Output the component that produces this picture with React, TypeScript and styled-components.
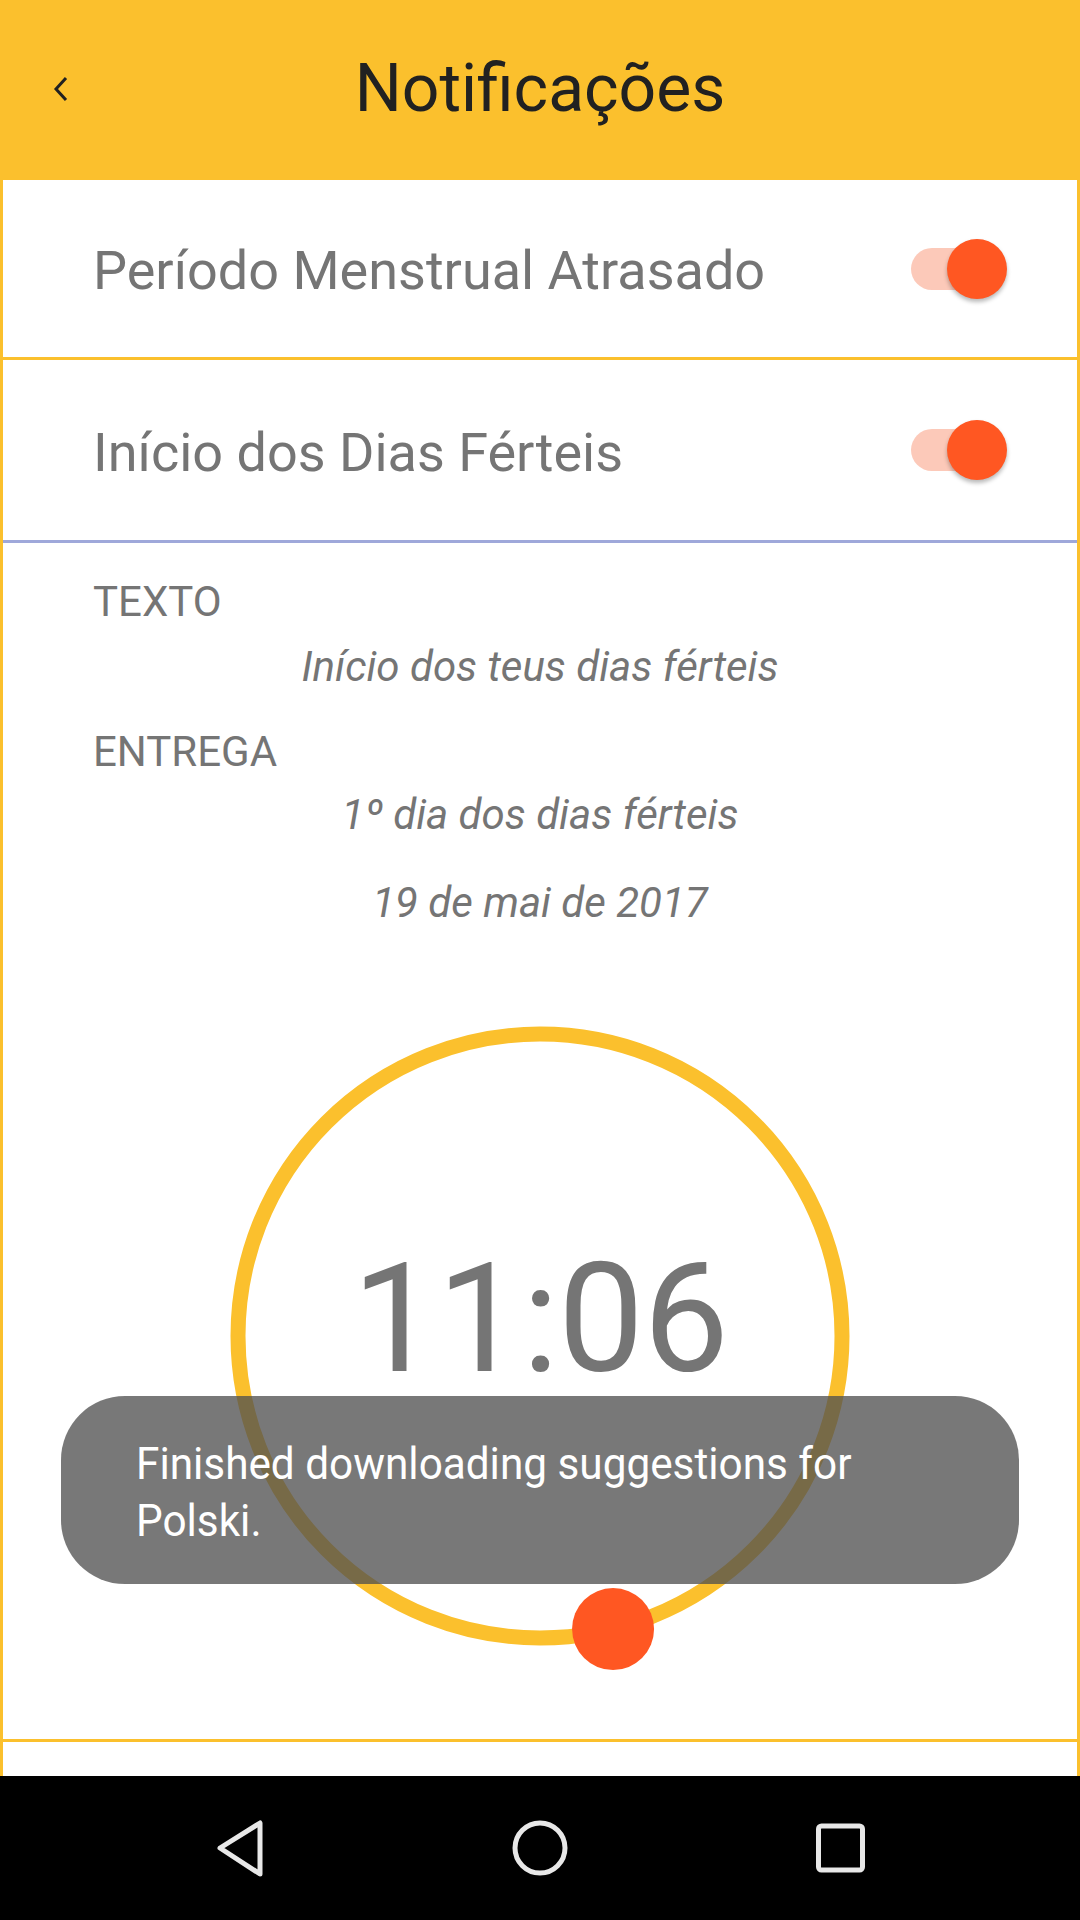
import React from 'react';
import styled, { createGlobalStyle } from 'styled-components';

const GlobalStyle = createGlobalStyle`
  html, body {
    margin: 0;
    padding: 0;
    background: #ffffff;
  }
  body {
    font-family: Roboto, 'Noto Sans', sans-serif;
  }
`;

const YELLOW = '#fbc02d';
const GREY_TEXT = '#757575';

const Screen = styled.div`
  position: relative;
  width: 1080px;
  height: 1920px;
  display: flex;
  flex-direction: column;
  overflow: hidden;
  background: #ffffff;
`;

const Header = styled.header`
  height: 180px;
  flex-shrink: 0;
  background: ${YELLOW};
  display: grid;
  grid-template-columns: 140px 1fr 140px;
  align-items: center;
`;

const BackButton = styled.button`
  justify-self: start;
  margin-left: 48px;
  margin-top: -2px;
  width: 26px;
  height: 30px;
  padding: 0;
  border: 0;
  background: transparent;
  display: flex;
  align-items: center;
  justify-content: center;
`;

const Title = styled.h1`
  margin: 0 0 4px;
  text-align: center;
  font-size: 66px;
  font-weight: 400;
  color: #212121;
`;

const Content = styled.main`
  flex: 1;
  display: flex;
  flex-direction: column;
  border-left: 3px solid ${YELLOW};
  border-right: 3px solid ${YELLOW};
  overflow: hidden;
`;

const SettingRow = styled.div<{ $height: number; $divider: string }>`
  height: ${({ $height }) => $height}px;
  flex-shrink: 0;
  display: flex;
  align-items: center;
  justify-content: space-between;
  padding: 0 82px 0 90px;
  border-bottom: 3px solid ${({ $divider }) => $divider};
`;

const RowLabel = styled.span`
  font-size: 54px;
  color: ${GREY_TEXT};
  margin-top: 4px;
`;

const SwitchTrack = styled.div`
  position: relative;
  width: 84px;
  height: 42px;
  border-radius: 21px;
  background: #fcc9b9;
`;

const SwitchThumb = styled.div`
  position: absolute;
  right: -12px;
  top: -9px;
  width: 60px;
  height: 60px;
  border-radius: 50%;
  background: #ff5722;
  box-shadow: 0 3px 4px rgba(0, 0, 0, 0.28);
`;

const Details = styled.section`
  height: 1199px;
  flex-shrink: 0;
  display: flex;
  flex-direction: column;
  padding-top: 35px;
  box-sizing: border-box;
  border-bottom: 3px solid ${YELLOW};
`;

const FieldLabel = styled.div<{ $gap: number }>`
  margin-top: ${({ $gap }) => $gap}px;
  padding-left: 90px;
  font-size: 42px;
  line-height: 48px;
  color: ${GREY_TEXT};
`;

const FieldValue = styled.div<{ $gap: number }>`
  margin-top: ${({ $gap }) => $gap}px;
  text-align: center;
  font-size: 42px;
  line-height: 48px;
  font-style: italic;
  color: ${GREY_TEXT};
`;

const Dial = styled.div`
  margin-top: 59px;
  align-self: center;
  width: 700px;
  height: 700px;
  display: grid;
  place-items: center;
  & > * {
    grid-area: 1 / 1;
  }
`;

const DialTime = styled.div`
  font-size: 153px;
  font-weight: 400;
  color: ${GREY_TEXT};
  margin-top: -36px;
  letter-spacing: -1px;
`;

const Toast = styled.div`
  position: absolute;
  left: 61px;
  top: 1396px;
  width: 958px;
  height: 188px;
  box-sizing: border-box;
  padding: 39px 75px 0;
  border-radius: 64px;
  background: rgba(80, 80, 80, 0.77);
  color: #ffffff;
`;

const ToastText = styled.p`
  margin: 0;
  font-size: 45px;
  line-height: 57px;
  width: 900px;
  transform: scaleX(0.94);
  transform-origin: left top;
`;

const NavBar = styled.nav`
  height: 144px;
  flex-shrink: 0;
  background: #000000;
  display: grid;
  grid-template-columns: repeat(3, 300px);
  justify-content: center;
  align-items: center;
  justify-items: center;
`;

const NavIcon = styled.svg`
  width: 64px;
  height: 64px;
  color: #e8e8e8;
`;

const Switch: React.FC = () => (
  <SwitchTrack>
    <SwitchThumb />
  </SwitchTrack>
);

const TimeDial: React.FC<{ time: string; angle: number }> = ({ time, angle }) => {
  const c = 350;
  const r = 302;
  const rad = (angle * Math.PI) / 180;
  const kx = c + r * Math.sin(rad);
  const ky = c + r * Math.cos(rad);
  return (
    <Dial>
      <svg width="700" height="700" viewBox="0 0 700 700">
        <circle cx={c} cy={c} r={r} fill="none" stroke={YELLOW} strokeWidth="15" />
        <circle cx={kx} cy={ky} r="41" fill="#ff5722" />
      </svg>
      <DialTime>{time}</DialTime>
    </Dial>
  );
};

const App: React.FC = () => {
  return (
    <Screen>
      <GlobalStyle />
      <Header>
        <BackButton aria-label="Voltar">
          <svg width="16" height="26" viewBox="0 0 16 26">
            <path d="M13 2 L3 13 L13 24" fill="none" stroke="#212121" strokeWidth="3" />
          </svg>
        </BackButton>
        <Title>Notificações</Title>
        <span />
      </Header>

      <Content>
        <SettingRow $height={177} $divider={YELLOW}>
          <RowLabel>Período Menstrual Atrasado</RowLabel>
          <Switch />
        </SettingRow>
        <SettingRow $height={180} $divider="#9fa8da">
          <RowLabel>Início dos Dias Férteis</RowLabel>
          <Switch />
        </SettingRow>

        <Details>
          <FieldLabel $gap={0}>TEXTO</FieldLabel>
          <FieldValue $gap={17}>Início dos teus dias férteis</FieldValue>
          <FieldLabel $gap={37}>ENTREGA</FieldLabel>
          <FieldValue $gap={15}>1º dia dos dias férteis</FieldValue>
          <FieldValue $gap={40}>19 de mai de 2017</FieldValue>
          <TimeDial time="11:06" angle={14} />
        </Details>
      </Content>

      <NavBar>
        <NavIcon viewBox="0 0 64 64">
          <path
            d="M52 7 L52 58 L12 32 Z"
            fill="none"
            stroke="currentColor"
            strokeWidth="5"
            strokeLinejoin="round"
          />
        </NavIcon>
        <NavIcon viewBox="0 0 64 64">
          <circle cx="32" cy="32" r="25" fill="none" stroke="currentColor" strokeWidth="5" />
        </NavIcon>
        <NavIcon viewBox="0 0 64 64">
          <rect x="10.5" y="10" width="44" height="44" rx="3" fill="none" stroke="currentColor" strokeWidth="5" />
        </NavIcon>
      </NavBar>

      <Toast>
        <ToastText>
          Finished downloading suggestions for
          <br />
          Polski.
        </ToastText>
      </Toast>
    </Screen>
  );
};

export default App;
